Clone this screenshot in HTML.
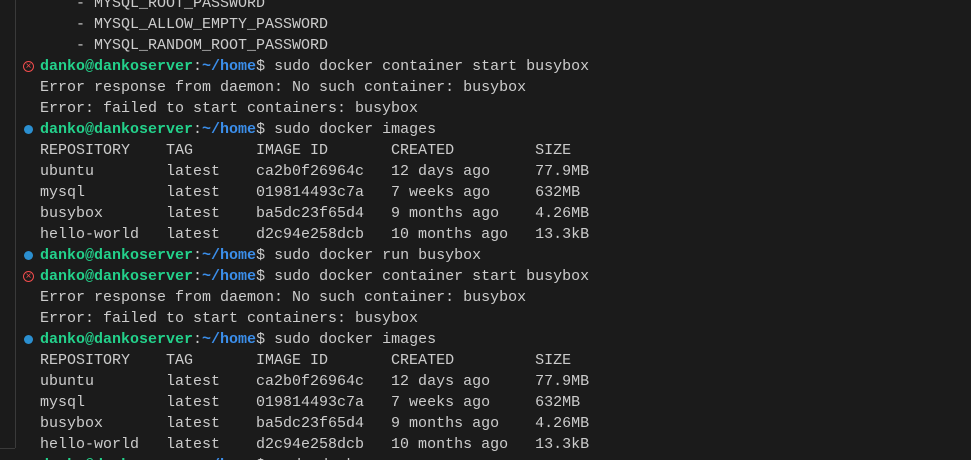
<!DOCTYPE html>
<html><head><meta charset="utf-8"><style>
html,body{margin:0;padding:0;width:971px;height:460px;overflow:hidden;background:#1b1b1b;}
.w{position:relative;width:971px;height:460px;overflow:hidden;}
.t{position:absolute;left:40px;top:-7px;font-family:"Liberation Mono",monospace;font-size:15px;line-height:21px;color:#cccccc;white-space:pre;}
.g{color:#23d18b;font-weight:bold}.b{color:#3b8eea;font-weight:bold}
.vl{position:absolute;left:15px;top:0;width:1px;height:448px;background:#3a3a3a}
.hl{position:absolute;left:0;top:448px;width:15px;height:1px;background:#3a3a3a}
.x{position:absolute;left:23px;width:11px;height:11px;border:1px solid #f14c4c;border-radius:50%;box-sizing:border-box;color:#f14c4c;font:10px/9px "Liberation Sans",sans-serif;text-align:center}
.d{position:absolute;left:24px;width:9px;height:9px;border-radius:50%;background:#2b8fd0}
</style></head><body><div class="w">
<div class="vl"></div><div class="hl"></div>
<div class="x" style="top:61px">×</div>
<div class="d" style="top:125px"></div>
<div class="d" style="top:251px"></div>
<div class="x" style="top:271px">×</div>
<div class="d" style="top:335px"></div>
<div class="t">    - MYSQL_ROOT_PASSWORD
    - MYSQL_ALLOW_EMPTY_PASSWORD
    - MYSQL_RANDOM_ROOT_PASSWORD
<span class="g">danko@dankoserver</span>:<span class="b">~/home</span>$ sudo docker container start busybox
Error response from daemon: No such container: busybox
Error: failed to start containers: busybox
<span class="g">danko@dankoserver</span>:<span class="b">~/home</span>$ sudo docker images
REPOSITORY    TAG       IMAGE ID       CREATED         SIZE
ubuntu        latest    ca2b0f26964c   12 days ago     77.9MB
mysql         latest    019814493c7a   7 weeks ago     632MB
busybox       latest    ba5dc23f65d4   9 months ago    4.26MB
hello-world   latest    d2c94e258dcb   10 months ago   13.3kB
<span class="g">danko@dankoserver</span>:<span class="b">~/home</span>$ sudo docker run busybox
<span class="g">danko@dankoserver</span>:<span class="b">~/home</span>$ sudo docker container start busybox
Error response from daemon: No such container: busybox
Error: failed to start containers: busybox
<span class="g">danko@dankoserver</span>:<span class="b">~/home</span>$ sudo docker images
REPOSITORY    TAG       IMAGE ID       CREATED         SIZE
ubuntu        latest    ca2b0f26964c   12 days ago     77.9MB
mysql         latest    019814493c7a   7 weeks ago     632MB
busybox       latest    ba5dc23f65d4   9 months ago    4.26MB
hello-world   latest    d2c94e258dcb   10 months ago   13.3kB
<span class="g">danko@dankoserver</span>:<span class="b">~/home</span>$ sudo docker ps</div>
</div></body></html>
